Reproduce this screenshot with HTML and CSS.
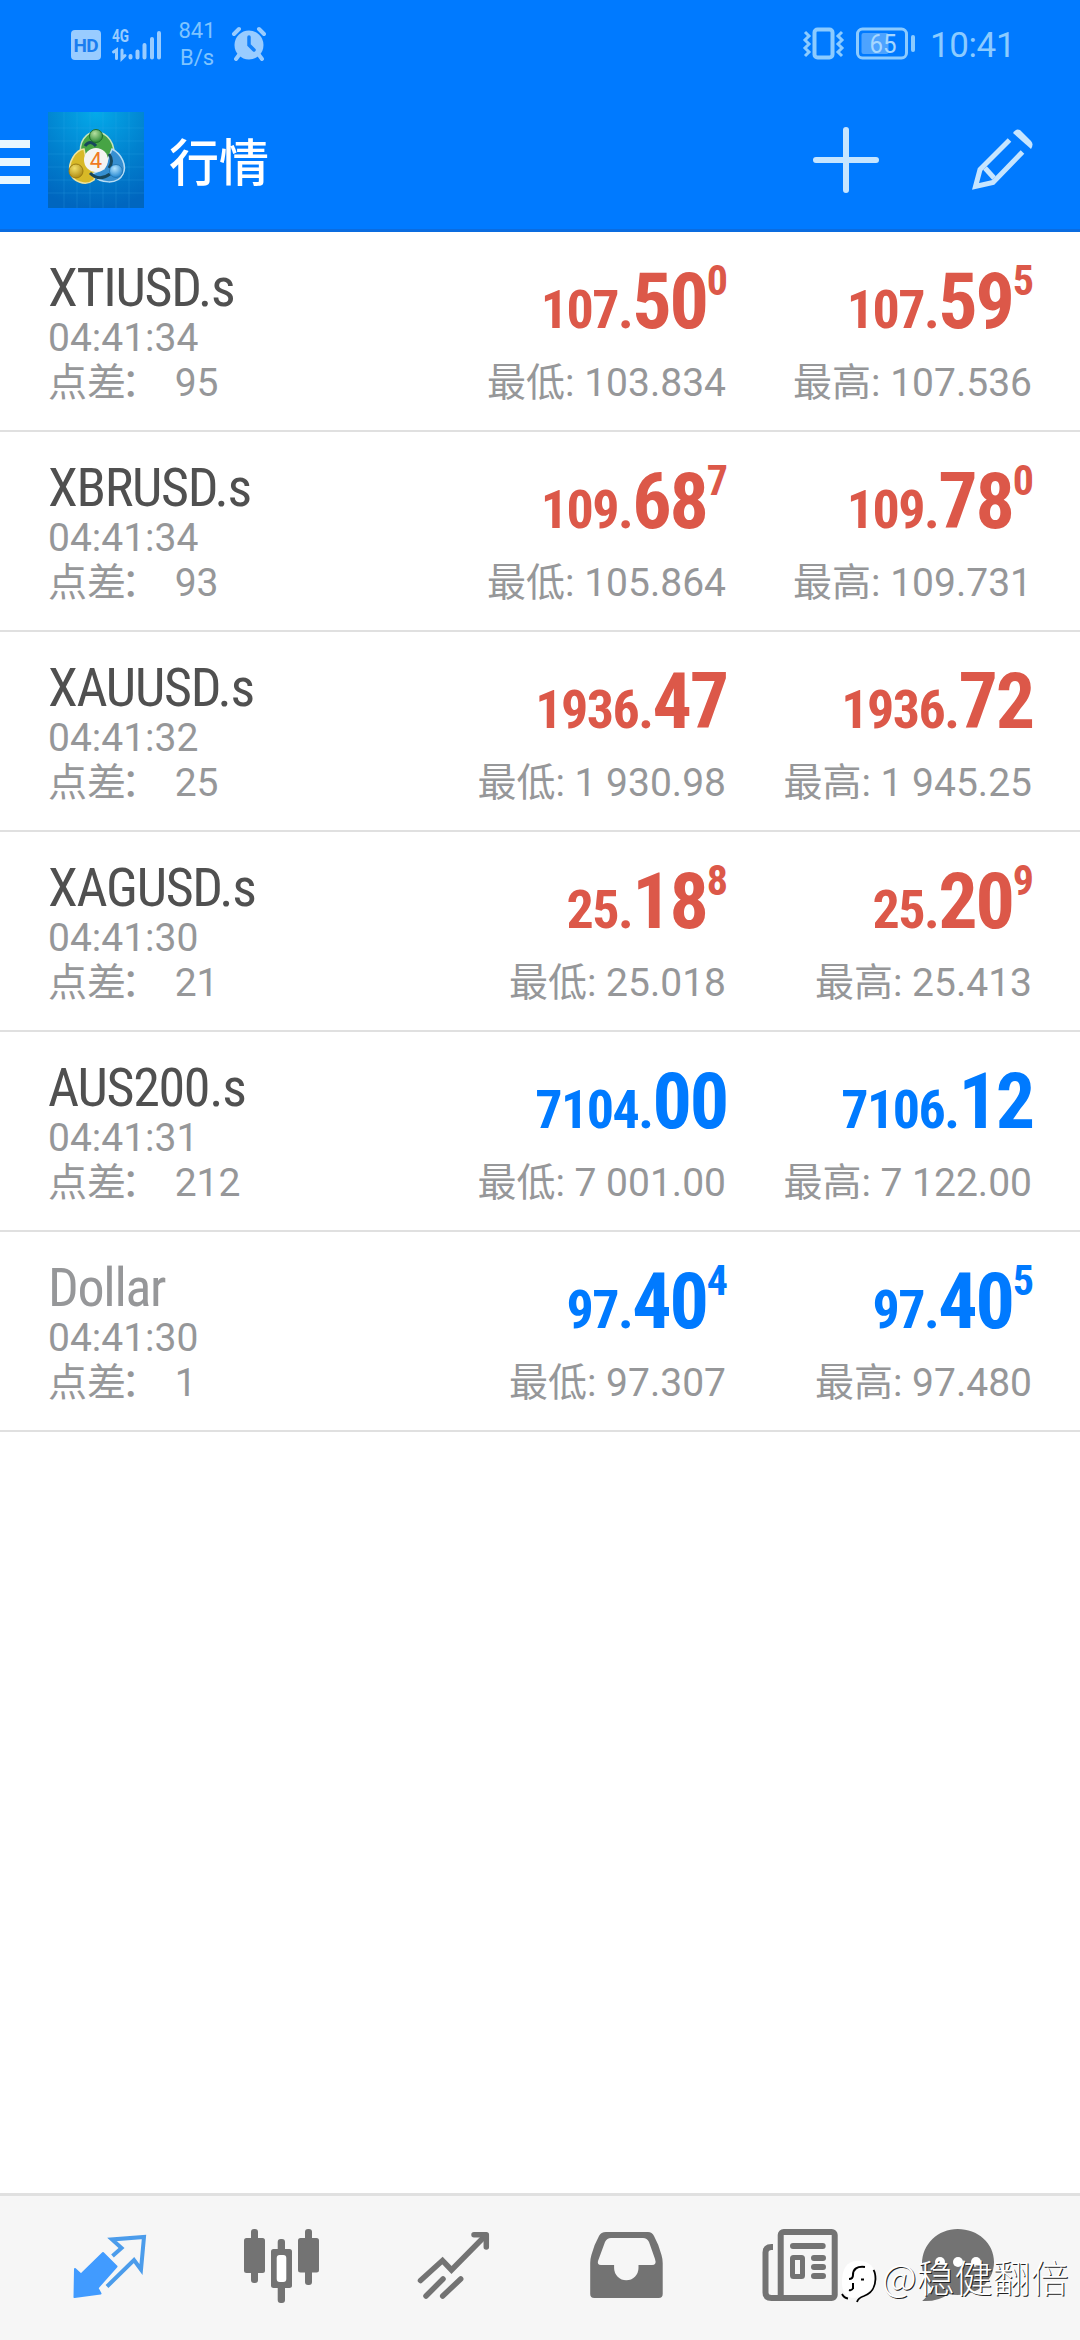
FILE: index.html
```html
<!DOCTYPE html>
<html lang="zh-CN">
<head>
<meta charset="utf-8">
<title>行情</title>
<link rel="stylesheet" href="styles.css">
</head>
<body>
<div class="screen">
  <header class="top">
    <div class="status">
      <svg class="st-hd" width="30" height="30" viewBox="0 0 30 30"><rect width="30" height="30" rx="4" fill="#99ccff"/><text x="15" y="22" font-size="19" font-weight="700" text-anchor="middle" textLength="25" fill="#1a7df0">HD</text></svg>
      <svg class="st-signal" width="50" height="34" viewBox="0 0 50 34"><text x="0" y="14.500" font-size="18" font-weight="700" textLength="17" lengthAdjust="spacingAndGlyphs" fill="#99ccff">4G</text><g fill="none" stroke="#99ccff" stroke-linecap="round"><path d="M1.500 25l3-2v8.500M10 23v8.500l3-3" stroke-width="3"/><path d="M18.500 29v1.500M25.500 24.500v6M32.500 18v12.500M40 12v18.500M47 6v24.500" stroke-width="4"/></g></svg>
      <div class="st-speed"><span>841</span><span>B/s</span></div>
      <svg class="st-alarm" width="34" height="34" viewBox="0 0 34 34"><circle cx="17" cy="18" r="14.500" fill="#99ccff"/><path d="M2 7l5-5M32 7l-5-5M7 28l-3 4M27 28l3 4" stroke="#99ccff" stroke-width="4" stroke-linecap="round"/><path d="M17 10v8l5 5" fill="none" stroke="#1280fa" stroke-width="3.500" stroke-linecap="round"/></svg>
      <span class="grow"></span>
      <svg class="st-vibrate" width="40" height="34" viewBox="0 0 40 34"><g fill="none" stroke="#8ccbff"><rect x="10.500" y="2.500" width="18" height="28" rx="3" stroke-width="4"/><path d="M1 5l4 4-4 4 4 4-4 4 4 4-4 4M38 5l-4 4 4 4-4 4 4 4-4 4 4 4" stroke-width="3"/></g></svg>
      <svg class="st-battery" width="60" height="34" viewBox="0 0 60 34"><rect x="1.500" y="2" width="49" height="29" rx="5" fill="none" stroke="#8ccbff" stroke-width="3"/><rect x="5.500" y="6" width="27" height="21" rx="2" fill="#4da3ff"/><rect x="55" y="8" width="4" height="17" rx="2" fill="#8ccbff"/><text x="27" y="26" font-size="26" text-anchor="middle" textLength="27" lengthAdjust="spacingAndGlyphs" fill="#a6d7ff">65</text></svg>
      <span class="clock">10:41</span>
    </div>
    <div class="appbar">
      <svg class="burger" width="30" height="44" viewBox="0 0 30 44"><path d="M0 4h30M0 22h30M0 40h30" stroke="#e8f7ff" stroke-width="8"/></svg>
      <svg class="logo" width="96" height="96" viewBox="0 0 96 96">
        <defs>
          <radialGradient id="bg" cx=".5" cy="0" r="1"><stop offset="0" stop-color="#04aaea"/><stop offset=".55" stop-color="#0182cf"/><stop offset="1" stop-color="#0066bf"/></radialGradient>
          <radialGradient id="gr" cx=".4" cy=".3" r=".7"><stop offset="0" stop-color="#b5e0a0"/><stop offset="1" stop-color="#2c8a36"/></radialGradient>
          <radialGradient id="ye" cx=".4" cy=".3" r=".7"><stop offset="0" stop-color="#f2e06a"/><stop offset="1" stop-color="#b08c13"/></radialGradient>
          <radialGradient id="bl" cx=".4" cy=".3" r=".7"><stop offset="0" stop-color="#b4e4ff"/><stop offset="1" stop-color="#2386d0"/></radialGradient>
        </defs>
        <rect width="96" height="96" fill="url(#bg)"/>
        <path d="M16 0v96M29 0v96M42 0v96M55 0v96M68 0v96M81 0v96M0 16h96M0 29h96M0 42h96M0 55h96M0 68h96M0 81h96" stroke="#3ab2ed" stroke-opacity=".22"/>
        <path d="M33 44C30 30 38 20 48 20c11 0 21 12 17 27l-7 4-10-9z" fill="#47a445" stroke="#c5e6bd" stroke-width="1.500"/>
        <path d="M36 37c-9 1-16 14-14 23 2 9 15 15 24 8l2-8-9-8z" fill="#d8b927" stroke="#eee39b" stroke-width="1.500"/>
        <path d="M64 37c10 5 15 17 11 25-5 11-23 10-31 0l12-5z" fill="#368fd1" stroke="#b6dcf4" stroke-width="1.500"/>
        <path d="M42 61q9 9 20 1M61 42q5 7 0 14M37 34q5-7 11 0" fill="none" stroke="#17475d" stroke-width="3"/>
        <circle cx="48" cy="24" r="6.500" fill="url(#gr)" stroke="#1e6f2c"/>
        <circle cx="28" cy="59" r="7" fill="url(#ye)" stroke="#9c7c12"/>
        <circle cx="68" cy="59" r="6.500" fill="url(#bl)" stroke="#2479b8"/>
        <circle cx="48" cy="48" r="12" fill="#f4f4f2"/>
        <text x="48" y="56" font-size="22" text-anchor="middle" fill="#f07a22">4</text>
      </svg>
      <h1 class="title">行情</h1>
      <span class="grow"></span>
      <svg class="plus" width="68" height="68" viewBox="812 126 68 68"><path d="M816 160h60M846 130v60" stroke="#c6e5ff" stroke-width="6" stroke-linecap="round"/></svg>
      <svg class="pencil" width="64" height="64" viewBox="970 128 64 64"><g fill="none" stroke="#c6e5ff" stroke-width="5"><path d="M1009.500 140l-29.500 29.500-4.500 17 17.500-4 29.500-30.500"/><path d="M985 168l9 10"/></g><path d="M1013 133q3-5 7-3l11 11q3 3 0 8z" fill="#c6e5ff"/></svg>
    </div>
  </header>

  <main class="quotes">
    <section class="row">
      <div class="info"><p class="symbol">XTIUSD.s</p><p class="meta">04:41:34</p><p class="meta">点差<span class="colon">：</span> 95</p></div>
      <div class="side down"><p class="price"><span class="sm">107.</span>50<span class="sup">0</span></p><p class="meta">最低: 103.834</p></div>
      <div class="side down"><p class="price"><span class="sm">107.</span>59<span class="sup">5</span></p><p class="meta">最高: 107.536</p></div>
    </section>
    <section class="row">
      <div class="info"><p class="symbol">XBRUSD.s</p><p class="meta">04:41:34</p><p class="meta">点差<span class="colon">：</span> 93</p></div>
      <div class="side down"><p class="price"><span class="sm">109.</span>68<span class="sup">7</span></p><p class="meta">最低: 105.864</p></div>
      <div class="side down"><p class="price"><span class="sm">109.</span>78<span class="sup">0</span></p><p class="meta">最高: 109.731</p></div>
    </section>
    <section class="row">
      <div class="info"><p class="symbol">XAUUSD.s</p><p class="meta">04:41:32</p><p class="meta">点差<span class="colon">：</span> 25</p></div>
      <div class="side down"><p class="price"><span class="sm">1936.</span>47</p><p class="meta">最低: 1 930.98</p></div>
      <div class="side down"><p class="price"><span class="sm">1936.</span>72</p><p class="meta">最高: 1 945.25</p></div>
    </section>
    <section class="row">
      <div class="info"><p class="symbol">XAGUSD.s</p><p class="meta">04:41:30</p><p class="meta">点差<span class="colon">：</span> 21</p></div>
      <div class="side down"><p class="price"><span class="sm">25.</span>18<span class="sup">8</span></p><p class="meta">最低: 25.018</p></div>
      <div class="side down"><p class="price"><span class="sm">25.</span>20<span class="sup">9</span></p><p class="meta">最高: 25.413</p></div>
    </section>
    <section class="row">
      <div class="info"><p class="symbol">AUS200.s</p><p class="meta">04:41:31</p><p class="meta">点差<span class="colon">：</span> 212</p></div>
      <div class="side up"><p class="price"><span class="sm">7104.</span>00</p><p class="meta">最低: 7 001.00</p></div>
      <div class="side up"><p class="price"><span class="sm">7106.</span>12</p><p class="meta">最高: 7 122.00</p></div>
    </section>
    <section class="row">
      <div class="info"><p class="symbol muted">Dollar</p><p class="meta">04:41:30</p><p class="meta">点差<span class="colon">：</span> 1</p></div>
      <div class="side up"><p class="price"><span class="sm">97.</span>40<span class="sup">4</span></p><p class="meta">最低: 97.307</p></div>
      <div class="side up"><p class="price"><span class="sm">97.</span>40<span class="sup">5</span></p><p class="meta">最高: 97.480</p></div>
    </section>
  </main>

  <nav class="tabs">
    <svg class="tab" viewBox="50 2208 120 120"><path d="M75 2269l6 5.500 22-21.500 13.500 13.500-19 21.500 3 5.500-26 3.500z" fill="#419bff" stroke="#419bff" stroke-width="2" stroke-linejoin="round"/><path d="M112.500 2256l9-8-9.500-8.500 32-2.500-3 32.500-7-9.500-27 26.500" fill="none" stroke="#4b9ceb" stroke-width="4"/></svg>
    <svg class="tab" viewBox="222 2208 120 120"><g fill="#737373"><rect x="244" y="2238" width="21" height="35" rx="2.500"/><rect x="251" y="2229" width="7" height="54" rx="3"/><rect x="298" y="2238" width="21" height="34.500" rx="2.500"/><rect x="305" y="2229" width="7" height="56" rx="3"/><rect x="277.700" y="2239" width="7.300" height="64" rx="3"/><rect x="271" y="2249" width="21" height="39" rx="2.500"/></g><rect x="276.700" y="2255" width="9.600" height="27" rx="3" fill="#fff"/></svg>
    <svg class="tab" viewBox="394 2208 120 120"><g fill="none" stroke="#737373" stroke-width="5.500" stroke-linecap="round"><path d="M420.500 2280.500l22-20 9 9.500 34-34.500"/><path d="M474 2234.700h12.300v12.300" stroke-linejoin="round"/><path d="M426 2296l17-17M442.700 2296l18-17"/></g></svg>
    <svg class="tab" viewBox="566 2208 120 120"><path d="M606 2232h42q4 0 6 4 5 9 7.500 19 1.200 4 1.200 8v31q0 4-4 4h-64.500q-4 0-4-4v-31q0-4 1.200-8 2.500-10 7.600-19 2-4 7-4z" fill="#737373"/><path d="M611 2238h32q4 0 6 4l6 17q2 6-3 6h-13.500v3a12.200 12.200 0 0 1-24.400 0v-3H601q-4 0-3-4l7-19q2-4 6-4z" fill="#f6f6f6"/></svg>
    <svg class="tab" viewBox="738 2208 120 120"><g fill="none" stroke="#737373" stroke-width="6"><rect x="780.700" y="2232" width="54" height="66" rx="3"/><path d="M773 2247h-1.500q-6 0-6 5.500v40q0 5.500 6 5.500h12"/><path d="M793 2246h29.700M814 2258h9M814 2267h9M814 2276h9" stroke-linecap="round"/><rect x="792.500" y="2257.500" width="10" height="19" rx="1" stroke-width="5"/></g></svg>
    <svg class="tab" viewBox="910 2208 120 120"><path d="M957.700 2229c20 0 36.300 14 36.300 33s-16 33-36.300 33q-5 0-9-1-11 8-26.500 7 7-6 9-13c-6-7-9.200-14-9.200-24 0-20 16-35 35.700-35z" fill="#737373"/><g fill="#fff"><circle cx="940" cy="2262" r="5"/><circle cx="958" cy="2262" r="5"/><circle cx="976" cy="2262" r="5"/></g></svg>
  </nav>

  <div class="watermark">
    <svg width="40" height="48" viewBox="838 2258 40 48"><path d="M858 2261c12 0 17 6 17 16 0 9-5 16-16 20-10 3-17-2-17-14 0-14 4-22 16-22z" fill="#fff"/><path d="M842 2294q2 4 6 4.500M857 2302q1-4 7-6c8-3 11-8 11.500-17q0-6-2-9" fill="none" stroke="#000" stroke-width="1.800"/><path d="M849 2279q4 0 4-4c0-6 4-9 12-8M861 2279.500h3M853 2283v6M849 2290q3 1 4-2" fill="none" stroke="#000" stroke-width="2"/></svg>
    <span>@稳健翻倍</span>
  </div>
</div>
</body>
</html>
```
FILE: styles.css
```css
* { box-sizing: border-box; }
body, p, h1 { margin: 0; }
body {
  background: #fff;
  font-family: Roboto, "Noto Sans CJK SC", sans-serif;
}
svg { display: block; flex: none; overflow: visible; }
.grow { flex: 1; }

.screen {
  position: relative;
  width: 1080px;
  height: 2340px;
  display: flex;
  flex-direction: column;
  overflow: hidden;
}

.top {
  height: 232px;
  background: #007aff;
  border-bottom: 3px solid #0a6ce0;
}
.status {
  height: 88px;
  display: flex;
  align-items: center;
  padding: 0 68px 0 71px;
}
.st-hd { margin: 2px 11px 0 0; }
.st-signal { margin-right: 16px; }
.st-speed {
  display: flex;
  flex-direction: column;
  width: 38px;
  font-size: 22px;
  line-height: 27px;
  text-align: center;
  color: #7fc4ff;
}
.st-alarm { margin-left: 16px; }
.st-vibrate { margin-right: 12px; }
.st-battery { margin-right: 14px; }
.clock {
  width: 82px;
  font-size: 35px;
  line-height: 40px;
  letter-spacing: -0.4px;
  white-space: nowrap;
  color: #8ccbff;
  margin-top: 4px;
}

.appbar {
  height: 144px;
  display: flex;
  align-items: center;
  padding-right: 46px;
}
.burger { margin-right: 18px; margin-top: 4px; }
.logo { margin-right: 25px; }
.title {
  font-size: 50px;
  line-height: 60px;
  font-weight: 500;
  color: #fff;
  margin-top: 7px;
}
.plus { margin-right: 90px; }

.row {
  height: 200px;
  display: grid;
  grid-template-columns: 1fr 306px 306px;
  padding: 28px 48px 0;
  border-bottom: 2px solid #e0e0e0;
}
.symbol {
  font-family: "Roboto Condensed", Roboto, sans-serif;
  font-stretch: 75%;
  font-size: 54px;
  line-height: 56px;
  letter-spacing: -0.024em;
  color: #505050;
}
.symbol.muted { color: #969799; }
.meta {
  font-size: 39px;
  line-height: 45px;
  color: #969799;
  white-space: pre;
}
.colon { margin-left: -5px; margin-right: 5px; }
.side { text-align: right; }
.price {
  font-family: "Roboto Condensed", Roboto, sans-serif;
  font-stretch: 75%;
  font-weight: 700;
  font-size: 78px;
  line-height: 83px;
  margin-bottom: 18px;
  white-space: nowrap;
}
.price { letter-spacing: -2.2px; margin-right: -1px; }
.sm { font-size: 54px; line-height: 0; letter-spacing: -1.5px; }
.sup { font-size: 42px; line-height: 0; letter-spacing: -1px; vertical-align: 33px; }
.down { color: #dc5849; }
.up { color: #007aff; }
.side .meta { color: #969799; }

.tabs {
  margin-top: auto;
  height: 147px;
  display: flex;
  justify-content: space-between;
  padding: 12px 50px 0;
  background: #f6f6f6;
  border-top: 3px solid #e0e0e0;
}
.tab { width: 120px; height: 120px; }

.watermark {
  position: absolute;
  left: 838px;
  top: 2258px;
  display: flex;
  color: #fff;
  font-family: "Noto Sans CJK SC", sans-serif;
  font-weight: 300;
  font-size: 38px;
  line-height: 36px;
  white-space: nowrap;
  text-shadow: 1px 1px 0 #222;
}
.watermark span { margin-left: 4px; }
```
